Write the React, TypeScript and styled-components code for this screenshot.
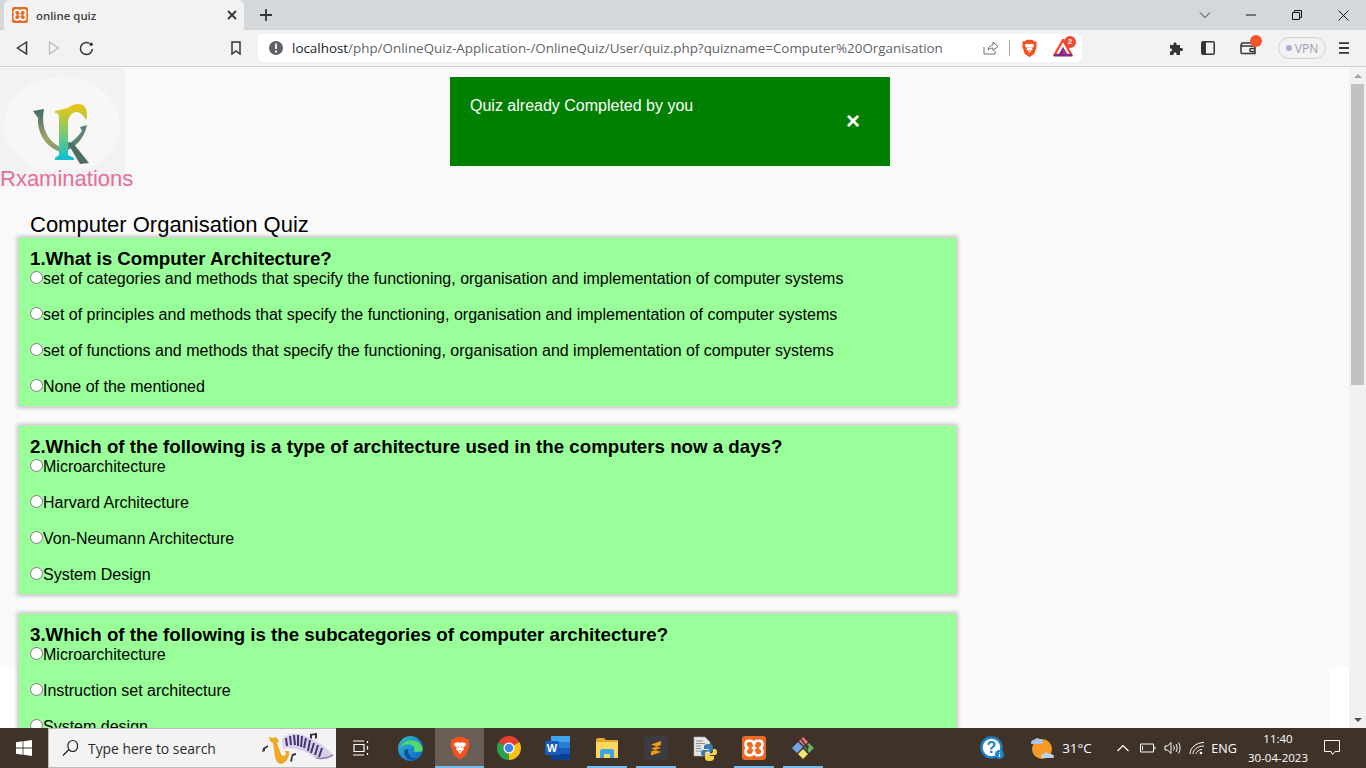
import React, { FC } from 'react';
import styled, { createGlobalStyle } from 'styled-components';

const GlobalStyle = createGlobalStyle`
  html, body {
    margin: 0;
    height: 100%;
    overflow: hidden;
    font-family: 'Liberation Sans', Arial, sans-serif;
  }
`;

const Screen = styled.div`
  width: 1366px;
  height: 768px;
  display: flex;
  flex-direction: column;
  overflow: hidden;
`;

/* browser chrome */
const TabStrip = styled.div`
  height: 30px;
  flex: none;
  display: flex;
  align-items: stretch;
  background: #d5d8db;
  padding-left: 4px;
`;

const Tab = styled.div`
  width: 240px;
  display: flex;
  align-items: center;
  padding: 0 4px 0 8px;
  box-sizing: border-box;
  background: #f2f2f2;
  border-radius: 6px 6px 0 0;
`;

const TabTitle = styled.span`
  margin-left: 8px;
  flex: 1;
  font: 600 11.4px 'Open Sans', sans-serif;
  color: #3c4043;
`;

const NewTab = styled.div`
  width: 44px;
  display: flex;
  align-items: center;
  justify-content: center;
`;

const WindowControls = styled.div`
  margin-left: auto;
  display: flex;
`;

const WindowButton = styled.div`
  width: 46px;
  display: flex;
  align-items: center;
  justify-content: center;
`;

const Toolbar = styled.div`
  height: 36px;
  flex: none;
  display: flex;
  align-items: center;
  padding-left: 6px;
  background: #f2f2f2;
  border-bottom: 1px solid #d0d2d4;
`;

const ToolButton = styled.div<{ $ml?: number }>`
  width: 32px;
  height: 28px;
  flex: none;
  margin-left: ${p => p.$ml || 0}px;
  position: relative;
  display: flex;
  align-items: center;
  justify-content: center;
`;

const UrlBar = styled.div`
  width: 824px;
  height: 28px;
  flex: none;
  margin-left: 6px;
  display: flex;
  align-items: center;
  background: #fff;
  border-radius: 5px;
  padding-left: 10px;
  box-sizing: border-box;
`;

const UrlText = styled.span`
  margin-left: 8px;
  width: 683px;
  flex: none;
  font: 13.4px 'Open Sans', sans-serif;
  color: #5f6368;
  white-space: nowrap;
  b {
    font-weight: 400;
    color: #202124;
  }
`;

const UrlDivider = styled.div`
  width: 1px;
  height: 16px;
  margin: 0 11px 0 2px;
  background: #a9abad;
`;

const CountBadge = styled.span`
  position: absolute;
  top: 2px;
  right: 3px;
  width: 12px;
  height: 12px;
  border-radius: 50%;
  background: #f0492e;
  color: #fff;
  font: 700 8px/12px 'Liberation Sans', sans-serif;
  text-align: center;
`;

const WalletDot = styled.span`
  position: absolute;
  top: 1px;
  right: 2px;
  width: 12px;
  height: 12px;
  border-radius: 50%;
  background: #fb542b;
`;

const VpnPill = styled.div`
  width: 48px;
  height: 22px;
  flex: none;
  margin-left: 14px;
  box-sizing: border-box;
  display: flex;
  align-items: center;
  justify-content: center;
  gap: 3px;
  border: 1px solid #d0d2d5;
  border-radius: 11px;
  font: 12px 'Open Sans', sans-serif;
  color: #9a9db5;
`;

const VpnDot = styled.span`
  width: 6px;
  height: 6px;
  border-radius: 50%;
  background: #a9acc6;
`;

/* page area */
const Viewport = styled.div`
  flex: 1;
  min-height: 0;
  display: flex;
`;

const Page = styled.div`
  flex: 1;
  min-width: 0;
  overflow: hidden;
  background: linear-gradient(#f9f9f9 600px, #fff 600px);
`;

const TopRow = styled.div`
  height: 145px;
  display: flex;
  align-items: flex-start;
`;

const LogoBlock = styled.div`
  width: 125px;
  height: 119px;
  margin-top: 1px;
  flex: none;
  background: #f2f2f2;
  display: flex;
  flex-direction: column;
  svg {
    flex: none;
  }
`;

const Brand = styled.div`
  flex: none;
  margin-top: -3px;
  font-size: 22px;
  line-height: 25px;
  color: #e36f98;
  white-space: nowrap;
`;

const Alert = styled.div`
  width: 440px;
  height: 89px;
  margin: 10px 0 0 325px;
  padding: 20px 30px 0 20px;
  box-sizing: border-box;
  background: #008000;
  color: #fff;
  font-size: 16px;
  line-height: 18px;
  display: flex;
  justify-content: space-between;
`;

const AlertClose = styled.span`
  margin-top: 14px;
  font-size: 24px;
  font-weight: 700;
  line-height: 20px;
`;

const Container = styled.div`
  width: 1310px;
  margin-left: 19px;
  background: #fafafa;
`;

const QuizTitle = styled.div`
  padding-left: 11px;
  height: 26px;
  font-size: 22px;
  line-height: 25px;
  color: #000;
`;

const Card = styled.div`
  width: 937px;
  margin-bottom: 20px;
  padding: 9px 11px 10px;
  box-sizing: border-box;
  background: #99ff99;
  box-shadow: 0 0 4px 2px #c4c4c4;
`;

const Question = styled.div`
  font-size: 18.72px;
  line-height: 23px;
  font-weight: 700;
  color: #000;
`;

const Option = styled.label`
  display: block;
  font-size: 16px;
  line-height: 18px;
  color: #000;
  & + & {
    margin-top: 18px;
  }
`;

const Radio = styled.input`
  margin: 0;
  width: 13px;
  height: 13px;
`;

const Scrollbar = styled.div`
  width: 17px;
  flex: none;
  display: flex;
  flex-direction: column;
  align-items: center;
  background: #f1f1f1;
`;

const ScrollArrow = styled.div<{ $down?: boolean }>`
  height: 17px;
  flex: none;
  display: flex;
  align-items: center;
  justify-content: center;
  margin-top: ${p => (p.$down ? 'auto' : '0')};
  &::before {
    content: '';
    border-style: solid;
    border-width: ${p => (p.$down ? '4px 4px 0 4px' : '0 4px 4px 4px')};
    border-color: ${p =>
      p.$down
        ? '#505050 transparent transparent transparent'
        : 'transparent transparent #a3a3a3 transparent'};
  }
`;

const ScrollThumb = styled.div`
  width: 13px;
  height: 301px;
  flex: none;
  background: #c1c1c1;
`;

/* taskbar */
const Taskbar = styled.div`
  height: 40px;
  flex: none;
  display: flex;
  align-items: stretch;
  background: #3f3229;
  color: #fff;
`;

const StartButton = styled.div`
  width: 48px;
  flex: none;
  display: flex;
  align-items: center;
  justify-content: center;
`;

const SearchBox = styled.div`
  width: 288px;
  flex: none;
  box-sizing: border-box;
  display: flex;
  align-items: center;
  padding-left: 12px;
  background: #f3f3f3;
  border: 1px solid #bcbcbc;
  border-width: 1px 0 1px 1px;
`;

const SearchText = styled.span`
  margin-left: 9px;
  flex: 1;
  font: 13.9px 'Open Sans', sans-serif;
  color: #2b2b2b;
`;

const TaskItem = styled.div<{ $w?: number; $open?: boolean; $active?: boolean }>`
  width: ${p => p.$w || 49}px;
  flex: none;
  position: relative;
  display: flex;
  align-items: center;
  justify-content: center;
  background: ${p => (p.$active ? '#695e55' : 'transparent')};
  &::after {
    content: '';
    display: ${p => (p.$open ? 'block' : 'none')};
    position: absolute;
    bottom: 0;
    left: ${p => (p.$active ? '0' : '4.5px')};
    right: ${p => (p.$active ? '0' : '4.5px')};
    height: 2px;
    background: #76b9ed;
  }
`;

const Tray = styled.div`
  margin-left: auto;
  display: flex;
  align-items: center;
  padding-right: 24px;
`;

const TraySlot = styled.div<{ $ml: number; $w: number }>`
  margin-left: ${p => p.$ml}px;
  width: ${p => p.$w}px;
  flex: none;
  display: flex;
  align-items: center;
  justify-content: center;
`;

const TrayText = styled.span<{ $size: number }>`
  font: ${p => p.$size}px 'Open Sans', sans-serif;
  color: #fff;
  white-space: nowrap;
`;

const Clock = styled.div`
  font: 11.5px/19px 'Open Sans', sans-serif;
  color: #fff;
  text-align: center;
  white-space: nowrap;
`;

/* drawings */
const XamppIcon: FC<{ size: number }> = ({ size }) => (
  <svg width={size} height={size} viewBox="0 0 16 16">
    <rect width="16" height="16" rx="2" fill="#ea6b26" />
    <path
      d="M4.5 3.2H6c1.5 0 1.5 1.5 2 2.5.5-1 .5-2.5 2-2.5h1.5c1.5 0 2.2 1 2.2 2.4S12.6 8 11.5 8c1.1 0 2.2 1 2.2 2.4s-.7 2.4-2.2 2.4H10c-1.5 0-1.5-1.5-2-2.5-.5 1-.5 2.5-2 2.5H4.5c-1.5 0-2.2-1-2.2-2.4S3.4 8 4.5 8C3.4 8 2.3 7 2.3 5.6s.7-2.4 2.2-2.4zM6.5 8h3"
      fill="none"
      stroke="#fff"
      strokeWidth="1.7"
    />
  </svg>
);

const BraveIcon: FC<{ size: number }> = ({ size }) => (
  <svg width={size} height={size * 1.1} viewBox="0 0 24 26">
    <path
      d="M5.5 3 8 .8h8L18.500 3l3 .3.8 2-.8 2.200.8 2.500-3.500 10.500L12 25.500 5.200 20.500 1.700 10 2.500 7.500l-.8-2.200.8-2z"
      fill="#f4511e"
    />
    <path
      d="M6 7.500 9.500 6.500 12 7.300l2.500-.8L18 7.500l.5 2-3 3.200 1 2-2 1.300-2.500 3.500L9.500 16l-2-1.300 1-2-3-3.200z"
      fill="#fff"
    />
    <path d="M9.800 10.500 11 12l-1.500.5zM14.200 10.500 13 12l1.500.5zM10.500 15.500h3L12 17z" fill="#f4511e" />
  </svg>
);

const BatIcon = () => (
  <svg width="20" height="18" viewBox="0 0 20 18">
    <path d="M10 1 18.500 16H1.500z" fill="none" stroke="#ef4f2b" strokeWidth="2.400" strokeLinejoin="miter" />
    <path d="M1 16.200h18" stroke="#7d2a8c" strokeWidth="2.400" />
    <path d="M10 8 14.500 15.500h-9z" fill="#7d2a8c" />
    <path d="M10 8 14.500 15.500H10z" fill="#a5348f" />
  </svg>
);

const SiteLogo = () => (
  <svg width="125" height="101" viewBox="0 0 125 101">
    <defs>
      <linearGradient id="stemGrad" x1="0" y1="0" x2="0" y2="1">
        <stop offset="0" stopColor="#f3c412" />
        <stop offset="0.5" stopColor="#7ecb6a" />
        <stop offset="1" stopColor="#0bbfd6" />
      </linearGradient>
      <linearGradient id="sideGrad" x1="0" y1="0" x2="0" y2="1">
        <stop offset="0" stopColor="#3f6a68" />
        <stop offset="0.7" stopColor="#9fa464" />
        <stop offset="1" stopColor="#7d9a70" />
      </linearGradient>
    </defs>
    <rect width="125" height="101" fill="#f2f2f2" />
    <ellipse cx="62" cy="57" rx="58" ry="48" fill="#f7f7f7" />
    <path d="M33 43 44 41C41 56 45 70 58 78 62 80 63 83 61 84 47 80 37 66 38 50z" fill="url(#sideGrad)" />
    <path d="M87 57 80 59 82 63C77 70 72 74 67 77L68 82C76 78 84 71 87 57z" fill="#5e8170" />
    <path d="M67 74 73 75 89 95 80 96z" fill="#4c6e66" />
    <path
      d="M55 43 68 40C72 36 79 35 83 37 87 40 88 47 86 52 83 47 80 44 76 44 70 45 68 50 68 56V87L74 90V92H55V90L59 87V50C59 46 58 45 55 45z"
      fill="url(#stemGrad)"
    />
  </svg>
);

const WindowsLogo = () => (
  <svg width="16" height="16" viewBox="0 0 16 16" fill="#fff">
    <path d="M0 2.300 6.600 1.300V7.600H0zM7.400 1.200 16 0V7.600H7.400zM0 8.400H6.600V14.700L0 13.700zM7.400 8.400H16V16L7.400 14.800z" />
  </svg>
);

const SearchDecor = () => (
  <svg width="76" height="36" viewBox="0 0 76 36">
    <path d="M22 9C28 3 38 2 45 6 52 10 62 12 73 25 66 28 61 29 56 28 50 25 46 21 40 20 33 18 27 17 23 19z" fill="#d9cfe9" />
    <path
      d="M26 8 27 16M30 6 31 15M34 5 35 15M38 5 38 16M42 6 41 17M46 8 44 18M50 10 48 21M54 13 51 23M58 15 55 25M62 18 59 27"
      stroke="#43366f"
      strokeWidth="2"
    />
    <path d="M56 28C62 29 68 28 73 25" stroke="#8f83b5" strokeWidth="1.500" fill="none" />
    <path
      d="M9 7 13 8 16 7 19 11 17 13 21 24C23 27 25 26 26 24L25 21 29 21C30 26 27 33 21 34 18 34 16 31 15 27L13 13 10 11z"
      fill="#eeaa24"
    />
    <path d="M3 18 8 15V17L5 19 5 21 2 22z" fill="#3a3a3a" />
    <path d="M30 31 32 24 36 23V25L33 26 32 32z" fill="#3a3a3a" />
    <path d="M50 8V4L57 3V8L55 9V5L52 5.500V9z" fill="#333" />
  </svg>
);

const EdgeIcon = () => (
  <svg width="25" height="25" viewBox="0 0 24 24">
    <defs>
      <linearGradient id="edgeGrad" x1="0" y1="0" x2="1" y2="1">
        <stop offset="0" stopColor="#35c1b4" />
        <stop offset="0.5" stopColor="#1b8fd8" />
        <stop offset="1" stopColor="#0a5fb0" />
      </linearGradient>
    </defs>
    <circle cx="12" cy="12" r="12" fill="url(#edgeGrad)" />
    <path d="M23.800 13C23 7 18 4 13 4 8 4 4 7 2.500 11 6 7 12 7 15 10 16.500 12 15 15 15 15H21C23 15 23.800 14 23.800 13z" fill="#53d86a" />
    <path d="M10 13C9 18 13 23 19 21 14 25 6 22 6 15 6 14 8 12 10 13z" fill="#0c4f95" />
  </svg>
);

const ChromeIcon = () => (
  <svg width="24" height="24" viewBox="0 0 24 24">
    <path d="M12 12 1.600 6A12 12 0 0 1 22.400 6z" fill="#e53d33" />
    <path d="M12 12H24A12 12 0 0 1 12 24z" fill="#fbc116" />
    <path d="M12 12 22.400 6A12 12 0 0 1 24 12z" fill="#fbc116" />
    <path d="M12 12 12 24A12 12 0 0 1 1.600 6z" fill="#2fa04e" />
    <circle cx="12" cy="12" r="5.500" fill="#fff" />
    <circle cx="12" cy="12" r="4.300" fill="#3f83ee" />
  </svg>
);

const WordIcon = () => (
  <svg width="25" height="24" viewBox="0 0 25 24">
    <rect x="6" y="0" width="19" height="6" fill="#41a5ee" />
    <rect x="6" y="6" width="19" height="6" fill="#2b7cd3" />
    <rect x="6" y="12" width="19" height="6" fill="#185abd" />
    <rect x="6" y="18" width="19" height="6" fill="#103f91" />
    <rect x="0" y="5" width="14" height="14" rx="1" fill="#185abd" />
    <text x="7" y="16" fontFamily="'Liberation Sans', sans-serif" fontSize="11" fontWeight="700" fill="#fff" textAnchor="middle">W</text>
  </svg>
);

const FolderIcon = () => (
  <svg width="24" height="22" viewBox="0 0 24 22">
    <path d="M1 3C1 2 1.500 1 3 1H9L11 3H23V6H1z" fill="#e0a82e" />
    <rect x="1" y="5" width="22" height="16" fill="#f9d65e" />
    <path d="M5 21V14C5 13 6 12 7 12H17C18 12 19 13 19 14V21H15V17H9V21z" fill="#3ba4e8" />
  </svg>
);

const SublimeIcon = () => (
  <svg width="24" height="24" viewBox="0 0 24 24">
    <rect width="24" height="24" rx="2" fill="#3a3c3f" />
    <path d="M17 5 7 8.500V12.500L17 9zM7 8.500 17 12V16L7 12.500zM17 12 7 15.500V19.500L17 16z" fill="#f79a0e" />
  </svg>
);

const PythonIcon = () => (
  <svg width="24" height="25" viewBox="0 0 24 25">
    <path d="M1 1H12L17 6V20H1z" fill="#e4e6e8" stroke="#a9aaad" strokeWidth=".6" />
    <path d="M3 5H10M3 7.500H12M3 10H8M3 12.500H8M3 15H8" stroke="#8a8a8a" strokeWidth="1" />
    <path d="M16 8C12 8 11 9 11 11V13H16V14H10C8.500 14 8 15 8 17S9 20 10 20H12V18C12 16.500 13 15.500 14.500 15.500H18C19 15.500 20 15 20 14V11C20 9 18.500 8 16 8z" fill="#3b7cb0" />
    <path d="M16 25C20 25 21 24 21 22V20H16V19H22C23.500 19 24 18 24 16S23 13 22 13H20V15C20 16.500 19 17.500 17.500 17.500H14C13 17.500 12 18 12 19V22C12 24 13.500 25 16 25z" fill="#fcd342" />
  </svg>
);

const GitIcon = () => (
  <svg width="24" height="24" viewBox="0 0 24 24">
    <path d="M1 12 7 6 12 11 6 17z" fill="#6ea5ea" />
    <path d="M8 5 12 1 17 6 13 10z" fill="#ea7a7a" />
    <path d="M13 12 18 7 23 12 18 17z" fill="#66b162" />
    <path d="M7 18 12 13 17 18 12 23z" fill="#f1e36e" />
    <path d="M10 3 16 11M16 11V17" stroke="#3a3a3a" strokeWidth="1.500" />
    <circle cx="16" cy="11" r="1.800" fill="#3a3a3a" />
  </svg>
);

const HelpIcon = () => (
  <svg width="25" height="24" viewBox="0 0 25 24">
    <circle cx="11.500" cy="11.500" r="10" fill="#fff" stroke="#1c7fc9" strokeWidth="2.500" />
    <text x="11.500" y="17" fontFamily="'Liberation Sans', sans-serif" fontSize="16" fontWeight="700" fill="#1c7fc9" textAnchor="middle">?</text>
    <circle cx="19.500" cy="18.500" r="4.500" fill="#1c86d1" />
    <path d="M19.500 16v1M19.500 18v3" stroke="#fff" strokeWidth="1.200" />
  </svg>
);

const WeatherIcon = () => (
  <svg width="24" height="24" viewBox="0 0 24 24">
    <circle cx="12" cy="13" r="10" fill="#f59a23" />
    <path d="M1 7C1 4.500 3 4 4 4 5 2 8 1.500 10 3 12 3 13 4.500 13 6.500 13 7.500 12 8 11 8H2C1.500 8 1 7.500 1 7z" fill="#a9c6e8" />
    <path d="M11 20.500C11 18.500 12.500 18 13.500 18 14.500 16 18 16 19 18 21 18 24 18.500 24 20.500 24 21.500 23 22 22 22H12.500C11.500 22 11 21.500 11 20.500z" fill="#b8d2ee" />
  </svg>
);

const Line: FC<{ d: string; w: number; h: number; color?: string; sw?: number }> = ({ d, w, h, color = '#323639', sw = 1.5 }) => (
  <svg width={w} height={h} viewBox={`0 0 ${w} ${h}`} fill="none" stroke={color} strokeWidth={sw}>
    <path d={d} />
  </svg>
);

const quiz = [
  {
    q: '1.What is Computer Architecture?',
    options: [
      'set of categories and methods that specify the functioning, organisation and implementation of computer systems',
      'set of principles and methods that specify the functioning, organisation and implementation of computer systems',
      'set of functions and methods that specify the functioning, organisation and implementation of computer systems',
      'None of the mentioned',
    ],
  },
  {
    q: '2.Which of the following is a type of architecture used in the computers now a days?',
    options: ['Microarchitecture', 'Harvard Architecture', 'Von-Neumann Architecture', 'System Design'],
  },
  {
    q: '3.Which of the following is the subcategories of computer architecture?',
    options: ['Microarchitecture', 'Instruction set architecture', 'System design', 'All of the mentioned'],
  },
];

const App: FC = () => (
  <Screen>
    <GlobalStyle />
    <TabStrip>
      <Tab>
        <XamppIcon size={16} />
        <TabTitle>online quiz</TabTitle>
        <Line w={16} h={16} d="M4 4 12 12M12 4 4 12" sw={1.800} />
      </Tab>
      <NewTab>
        <Line w={14} h={14} d="M7 1V13M1 7H13" sw={1.800} />
      </NewTab>
      <WindowControls>
        <WindowButton>
          <Line w={12} h={8} d="M1 1.500 6 6.500 11 1.500" sw={1} />
        </WindowButton>
        <WindowButton>
          <Line w={10} h={2} d="M0 1H10" sw={1} color="#111" />
        </WindowButton>
        <WindowButton>
          <Line w={10} h={10} d="M.5 2.500H7.500V9.500H.5zM2.500 2.500V.5H9.500V7.500H7.500" sw={1} color="#111" />
        </WindowButton>
        <WindowButton>
          <Line w={11} h={11} d="M.5.5 10.500 10.500M10.500.5 .5 10.500" sw={1} color="#111" />
        </WindowButton>
      </WindowControls>
    </TabStrip>
    <Toolbar>
      <ToolButton>
        <Line w={12} h={14} d="M10.500 1 1.500 7 10.500 13z" sw={1.500} />
      </ToolButton>
      <ToolButton>
        <Line w={12} h={14} d="M1.500 1 10.500 7 1.500 13z" sw={1.200} color="#b5b8bb" />
      </ToolButton>
      <ToolButton>
        <svg width="15" height="15" viewBox="0 0 14 14" fill="none" stroke="#323639" strokeWidth="1.400">
          <path d="M12.500 7.500A5.600 5.600 0 1 1 9.500 2" />
          <circle cx="11.300" cy="3" r="1.600" fill="#323639" stroke="none" />
        </svg>
      </ToolButton>
      <ToolButton $ml={118}>
        <Line w={10} h={14} d="M1 1H9V13L5 10 1 13z" sw={1.500} />
      </ToolButton>
      <UrlBar>
        <svg width="16" height="16" viewBox="0 0 16 16">
          <circle cx="8" cy="8" r="7" fill="#5f6368" />
          <path d="M8 3.500V9M8 10.500V12.500" stroke="#fff" strokeWidth="1.800" />
        </svg>
        <UrlText>
          <b>localhost</b>/php/OnlineQuiz-Application-/OnlineQuiz/User/quiz.php?quizname=Computer%20Organisation
        </UrlText>
        <ToolButton>
          <Line w={16} h={14} d="M1 6V13H12V10M5 9C5 6 8 4 10 4V1L15 5.500 10 9.500V7C8 7 6 8 5 9z" sw={1} color="#6b6e71" />
        </ToolButton>
        <UrlDivider />
        <BraveIcon size={17} />
        <ToolButton $ml={9}>
          <BatIcon />
          <CountBadge>2</CountBadge>
        </ToolButton>
      </UrlBar>
      <ToolButton $ml={78}>
        <svg width="15" height="15" viewBox="0 0 15 15" fill="#323639">
          <path d="M1 4H4.500V2.500C4.500 1 7.500 1 7.500 2.500V4H11V7H12.500C14.500 7 14.500 10 12.500 10H11V14H7.500V12.500C7.500 11 4.500 11 4.500 12.500V14H1V10.500H2C3.500 10.500 3.500 7.500 2 7.500H1z" />
        </svg>
      </ToolButton>
      <ToolButton>
        <svg width="14" height="14" viewBox="0 0 14 14">
          <rect x=".75" y=".75" width="12.500" height="12.500" rx="1.500" fill="#f2f2f2" stroke="#323639" strokeWidth="1.500" />
          <rect x="1" y="1" width="4" height="12" fill="#323639" />
        </svg>
      </ToolButton>
      <ToolButton $ml={8}>
        <Line w={16} h={14} d="M14 3V2H2.500C1 2 1 5 2.500 5H15V12.500H2C1 12.500 1 12 1 11V3.500M15 7.500H11C9.500 7.500 9.500 10.500 11 10.500H15" sw={1.500} />
        <WalletDot />
      </ToolButton>
      <VpnPill>
        <VpnDot />
        VPN
      </VpnPill>
      <ToolButton $ml={2}>
        <Line w={10} h={12} d="M0 1.200H10M0 6H10M0 10.800H10" sw={1.800} />
      </ToolButton>
    </Toolbar>
    <Viewport>
      <Page>
        <TopRow>
          <LogoBlock>
            <SiteLogo />
            <Brand>Rxaminations</Brand>
          </LogoBlock>
          <Alert>
            <span>Quiz already Completed by you</span>
            <AlertClose>×</AlertClose>
          </Alert>
        </TopRow>
        <Container>
          <QuizTitle>Computer Organisation Quiz</QuizTitle>
          {quiz.map(item => (
            <Card key={item.q}>
              <Question>{item.q}</Question>
              {item.options.map(o => (
                <Option key={o}>
                  <Radio type="radio" name={item.q} />
                  {o}
                </Option>
              ))}
            </Card>
          ))}
        </Container>
      </Page>
      <Scrollbar>
        <ScrollArrow />
        <ScrollThumb />
        <ScrollArrow $down />
      </Scrollbar>
    </Viewport>
    <Taskbar>
      <StartButton>
        <WindowsLogo />
      </StartButton>
      <SearchBox>
        <Line w={18} h={18} d="M7.500 11 2 16.500M7 7A4.800 4.800 0 1 0 16.500 7 4.800 4.800 0 1 0 7 7z" sw={1.200} color="#222" />
        <SearchText>Type here to search</SearchText>
        <SearchDecor />
      </SearchBox>
      <TaskItem $w={50}>
        <Line w={18} h={16} d="M1 1H12M1 15H12M2 4.500H12V11.500H2zM15.500 1V3M15.500 6V9.500M15.500 13V15" sw={1.200} color="#fff" />
      </TaskItem>
      <TaskItem>
        <EdgeIcon />
      </TaskItem>
      <TaskItem $open $active>
        <BraveIcon size={22} />
      </TaskItem>
      <TaskItem>
        <ChromeIcon />
      </TaskItem>
      <TaskItem>
        <WordIcon />
      </TaskItem>
      <TaskItem $open>
        <FolderIcon />
      </TaskItem>
      <TaskItem $open>
        <SublimeIcon />
      </TaskItem>
      <TaskItem>
        <PythonIcon />
      </TaskItem>
      <TaskItem $open>
        <XamppIcon size={24} />
      </TaskItem>
      <TaskItem $open>
        <GitIcon />
      </TaskItem>
      <Tray>
        <TraySlot $ml={0} $w={25}>
          <HelpIcon />
        </TraySlot>
        <TraySlot $ml={25} $w={24}>
          <WeatherIcon />
        </TraySlot>
        <TraySlot $ml={8} $w={30}>
          <TrayText $size={13.5}>31°C</TrayText>
        </TraySlot>
        <TraySlot $ml={23} $w={16}>
          <Line w={12} h={8} d="M.5 7 6 1.500 11.500 7" sw={1.200} color="#fff" />
        </TraySlot>
        <TraySlot $ml={9} $w={16}>
          <Line w={16} h={10} d="M.5 1H13.500V9H.5zM15 3.500V6.500M2.500 3V7" sw={1} color="#fff" />
        </TraySlot>
        <TraySlot $ml={8} $w={17}>
          <Line w={17} h={14} d="M1 5H3.500L7 1.500V12.500L3.500 9H1zM9.500 4.500C10.500 6 10.500 8 9.500 9.500M12 3C13.500 5.500 13.500 8.500 12 11M14.500 1.500C16.500 5 16.500 9 14.500 12.500" sw={1} color="#fff" />
        </TraySlot>
        <TraySlot $ml={8} $w={16}>
          <svg width="16" height="14" viewBox="0 0 16 14" fill="none" stroke="#fff" strokeWidth="1">
            <path d="M1 13C1 7 7 1.500 15 1.500M4 13C4 9 8 5 15 5M7 13C7 11 10 8.500 13 8.500" />
            <circle cx="12" cy="12" r="1.300" fill="#fff" stroke="none" />
          </svg>
        </TraySlot>
        <TraySlot $ml={7} $w={24}>
          <TrayText $size={12.5}>ENG</TrayText>
        </TraySlot>
        <TraySlot $ml={11} $w={62}>
          <Clock>
            11:40
            <br />
            30-04-2023
          </Clock>
        </TraySlot>
        <TraySlot $ml={13} $w={20}>
          <Line w={16} h={16} d="M.5 .5H15.500V11.500H11L8.500 14.500 7 11.500H.5z" sw={1} color="#fff" />
        </TraySlot>
      </Tray>
    </Taskbar>
  </Screen>
);

export default App;
